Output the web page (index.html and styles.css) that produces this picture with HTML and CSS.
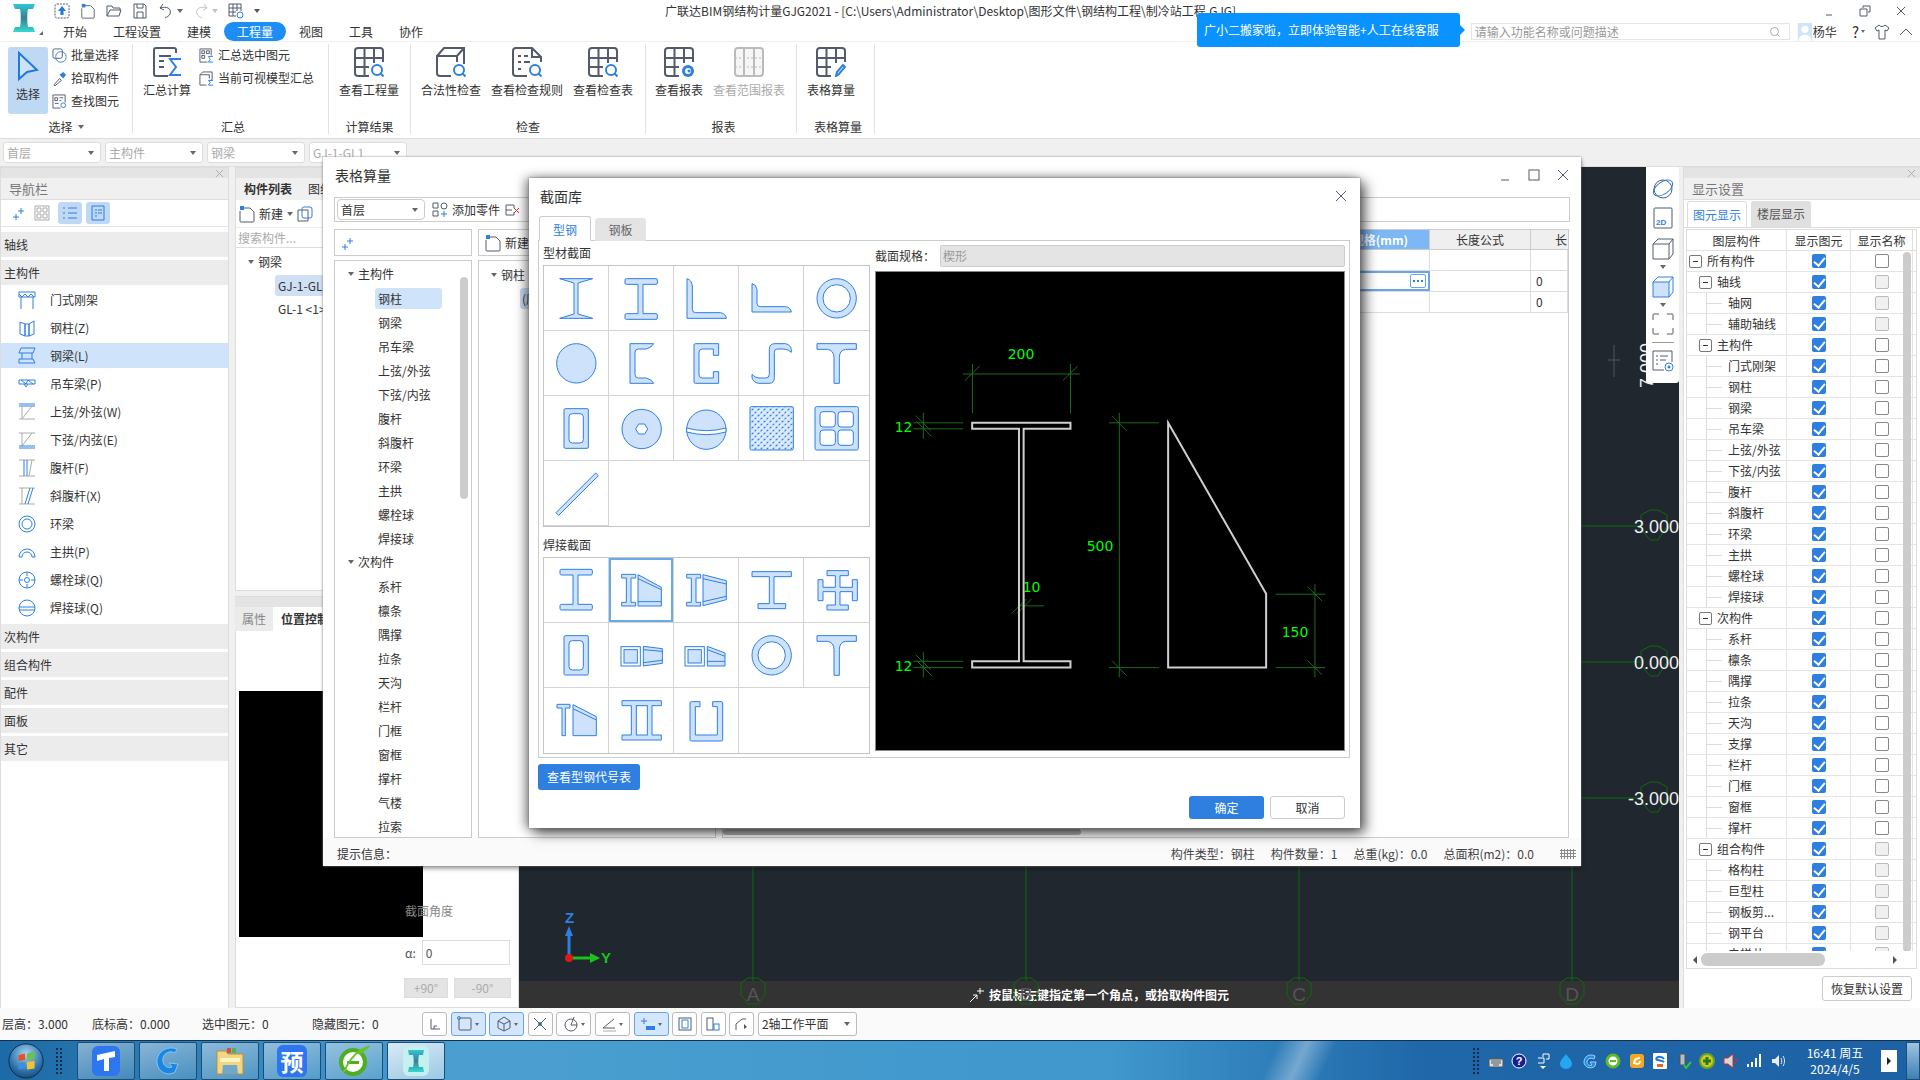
FILE: index.html
```html
<!DOCTYPE html>
<html lang="zh-CN">
<head>
<meta charset="utf-8">
<title>广联达BIM钢结构计量GJG2021</title>
<link rel="stylesheet" href="styles.css">
</head>
<body>
<svg class="sprite" xmlns="http://www.w3.org/2000/svg">
  <defs>
    <pattern id="hatch" width="18" height="18" patternUnits="userSpaceOnUse"><rect width="18" height="18" fill="#dceafc"/><path d="M2 2h8l-8 7zM11 11h7l-7 7z" fill="#2d7fe6"/></pattern>
    <linearGradient id="teal" x1="0" y1="0" x2="0" y2="1"><stop offset="0" stop-color="#2fc7d6"/><stop offset=".5" stop-color="#3a7f96"/><stop offset="1" stop-color="#33d9cf"/></linearGradient>
    <radialGradient id="orb" cx=".5" cy=".3" r=".8"><stop offset="0" stop-color="#a8d4f0"/><stop offset=".6" stop-color="#2f76b0"/><stop offset="1" stop-color="#12395f"/></radialGradient>
  </defs>
  <symbol id="g-grid" viewBox="0 0 30 30"><path class="dk" d="M15 29H4a3 3 0 0 1-3-3V4a3 3 0 0 1 3-3h22a3 3 0 0 1 3 3v11M1 11h28M1 20h14M10.500 1v28M20 1v15"/></symbol>
  <symbol id="g-mag" viewBox="0 0 30 30"><circle class="bl" cx="23" cy="23" r="5"/><path class="bl" d="M26.500 26.500l3 3"/></symbol>
  <symbol id="g-plus" viewBox="0 0 16 16"><path class="bl1" d="M9 3v6M6 6h6M4 9v6M1 12h6"/></symbol>
  <symbol id="g-new" viewBox="0 0 16 18"><path class="dk1" d="M4 3h7l4 4v9a1 1 0 0 1-1 1H2a1 1 0 0 1-1-1V6"/><path d="M1 1h4v4H1z" fill="#2f7fe0"/></symbol>
</svg>

<div class="app">
  <header class="titlebar">
    <div class="logo-col">
      <svg class="logo" viewBox="0 0 24 30"><path d="M1 1h22l-2 5h-5c-1 5-1 13 0 18h5l2 5H1l2-5h5c1-5 1-13 0-18H3z" fill="url(#teal)"/></svg>
      <i class="logo-tri"></i>
    </div>
    <div class="title-col">
      <div class="title-row">
        <div class="qat">
          <svg class="qi" viewBox="0 0 16 16"><rect class="dk1 dash" x="1" y="1" width="14" height="14" rx="2"/><path d="M8 3l4 5H9.500v4h-3V8H4z" fill="#1f78e0"/></svg>
          <svg class="qi" viewBox="0 0 16 18"><use href="#g-new"/></svg>
          <svg class="qi" viewBox="0 0 16 16"><path class="dk1" d="M1 13V3h5l1 2h7v2M1 13h12l2-6H4z"/></svg>
          <svg class="qi" viewBox="0 0 16 16"><path class="dk1" d="M2 1h10l2 2v12H2zM5 1v4h6V1M5 15V9h6v6"/></svg>
          <span class="qa-g"><svg class="qi" viewBox="0 0 16 16"><path class="dk1" d="M5 1L2 5l4 2M2 5c6-2 12 0 10 6-1 2-3 3-5 4"/></svg><i class="car"></i></span>
          <span class="qa-g"><svg class="qi dim" viewBox="0 0 16 16"><path class="dk1" d="M11 1l3 4-4 2M14 5C8 3 2 5 4 11c1 2 3 3 5 4"/></svg><i class="car dimc"></i></span>
          <svg class="qi" viewBox="0 0 16 16"><path class="dk1" d="M1 1h12v7M1 1v12h7M1 5h12M1 9h7M5 1v12M9 1v7"/><circle class="bl1" cx="12" cy="12" r="3"/></svg>
          <i class="car more"></i>
        </div>
        <div class="apptitle">广联达BIM钢结构计量GJG2021 - [C:\Users\Administrator\Desktop\图形文件\钢结构工程\制冷站工程.GJG]</div>
        <div class="winctl">
          <svg class="wc" viewBox="0 0 12 12"><path class="dk1" d="M3 10h6"/></svg>
          <svg class="wc" viewBox="0 0 12 12"><path class="dk1" d="M4 3V1h7v6H9M1 4h7v7H1z"/></svg>
          <svg class="wc" viewBox="0 0 12 12"><path class="dk1" d="M2 2l8 8M10 2l-8 8"/></svg>
        </div>
      </div>
      <div class="tab-row">
        <nav class="tabs">
          <span class="tab">开始</span><span class="tab">工程设置</span><span class="tab">建模</span><span class="tab on">工程量</span><span class="tab">视图</span><span class="tab">工具</span><span class="tab">协作</span>
        </nav>
        <div class="rtools">
          <div class="search"><span>请输入功能名称或问题描述</span><svg class="sic" viewBox="0 0 12 12"><circle cx="5.500" cy="5.500" r="4" class="gy"/><path class="gy" d="M8.500 8.500l2 2"/></svg></div>
          <svg class="avatar" viewBox="0 0 16 20"><rect width="16" height="20" fill="#cfe3fa"/><circle cx="8" cy="7" r="4" fill="#fff"/><path d="M1 20c0-5 3-7 7-7s7 2 7 7z" fill="#fff"/></svg>
          <span class="uname">杨华</span>
          <span class="help">?<i class="car"></i></span>
          <svg class="shirt" viewBox="0 0 16 16"><path class="dk1" d="M5 1L1 4l2 3 2-1v9h6V6l2 1 2-3-4-3c-1 2-5 2-6 0z"/></svg>
          <svg class="up" viewBox="0 0 14 10"><path class="dk1" d="M1 8l6-6 6 6"/></svg>
        </div>
      </div>
    </div>
  </header>

  <section class="ribbon">
    <div class="grp g-sel">
      <div class="grp-body">
        <div class="sel-btn"><svg class="sel-ic" viewBox="0 0 22 32"><path d="M2 2v26l8-7 10-2z" fill="#cfe2fb" stroke="#1f78e0" stroke-width="2"/></svg><span>选择</span></div>
        <div class="smalls">
          <div class="sm"><svg class="smi" viewBox="0 0 16 16"><rect class="dk1" x="1" y="1" width="10" height="10" rx="2"/><rect class="bl1" x="4" y="4" width="11" height="11" rx="5"/></svg>批量选择</div>
          <div class="sm"><svg class="smi" viewBox="0 0 16 16"><path class="dk1" d="M2 15l6-7 2 2-7 6z"/><path d="M8 4l4-3 3 3-3 4z" fill="#2f7fe0"/></svg>拾取构件</div>
          <div class="sm"><svg class="smi" viewBox="0 0 16 16"><path class="dk1" d="M9 15H1V1h13v8M3 4h3v3H3zM8 4h4M8 7h2M3 10h4"/><circle class="bl1" cx="12" cy="12" r="2.500"/></svg>查找图元</div>
        </div>
      </div>
      <div class="grp-lab">选择<i class="car"></i></div>
    </div>
    <div class="grp g-sum">
      <div class="grp-body">
        <div class="big"><svg class="bi" viewBox="0 0 30 30"><path class="dk" d="M24 6V3a2 2 0 0 0-2-2H4a2 2 0 0 0-2 2v24a2 2 0 0 0 2 2h12M7 9h12M7 14h5M7 20h5"/><path class="bl" d="M29 12H18l6 8-6 8h11"/></svg><span>汇总计算</span></div>
        <div class="smalls sm2">
          <div class="sm"><svg class="smi" viewBox="0 0 16 16"><path class="dk1" d="M9 15H1V1h12v7M3 3h3v3H3zM8 3h3v3H8zM3 8h3v3H3z"/><path class="bl1" d="M15 9h-5l2 3-2 3h5"/></svg>汇总选中图元</div>
          <div class="sm"><svg class="smi" viewBox="0 0 16 16"><path class="dk1" d="M8 15H1V4h10v4M1 4l3-3h10v8l-3 2"/><path class="bl1" d="M15 10h-5l2 2-2 3h5"/></svg>当前可视模型汇总</div>
        </div>
      </div>
      <div class="grp-lab">汇总</div>
    </div>
    <div class="grp g-res">
      <div class="grp-body pad">
        <div class="big"><svg class="bi" viewBox="0 0 30 30"><use href="#g-grid"/><use href="#g-mag"/></svg><span>查看工程量</span></div>
      </div>
      <div class="grp-lab">计算结果</div>
    </div>
    <div class="grp g-chk">
      <div class="grp-body pad">
        <div class="big"><svg class="bi" viewBox="0 0 30 30"><path class="dk" d="M15 29H4a3 3 0 0 1-3-3V9h20v6M1 9l7-8h20v16M21 9l7-8"/><use href="#g-mag"/></svg><span>合法性检查</span></div>
        <div class="big"><svg class="bi" viewBox="0 0 30 30"><path class="dk" d="M15 29H4a3 3 0 0 1-3-3V4a3 3 0 0 1 3-3h16l9 9v5M20 1v9h9M6 9h3M12 9h4M6 15h3M12 15h6M6 22h3"/><use href="#g-mag"/></svg><span>查看检查规则</span></div>
        <div class="big"><svg class="bi" viewBox="0 0 30 30"><use href="#g-grid"/><use href="#g-mag"/></svg><span>查看检查表</span></div>
      </div>
      <div class="grp-lab">检查</div>
    </div>
    <div class="grp g-rep">
      <div class="grp-body pad2">
        <div class="big"><svg class="bi" viewBox="0 0 30 30"><use href="#g-grid"/><circle cx="24" cy="24" r="6" fill="#2f7fe0"/><circle cx="24" cy="24" r="3" fill="#fff"/><circle cx="25" cy="24" r="1.500" fill="#2f7fe0"/></svg><span>查看报表</span></div>
        <div class="big off"><svg class="bi" viewBox="0 0 30 30"><rect x="1" y="1" width="28" height="28" rx="3" fill="#f6f6f6" stroke="#bbb" stroke-width="2"/><path d="M10 1v28M20 1v28" stroke="#bbb" stroke-width="2"/><path d="M1 11h28M1 20h28" stroke="#bbb" stroke-dasharray="2 2"/></svg><span>查看范围报表</span></div>
      </div>
      <div class="grp-lab">报表</div>
    </div>
    <div class="grp g-tab">
      <div class="grp-body pad">
        <div class="big"><svg class="bi" viewBox="0 0 30 30"><use href="#g-grid"/><path class="bl" d="M20 29l1-4 6-7 2 2-6 7z"/></svg><span>表格算量</span></div>
      </div>
      <div class="grp-lab">表格算量</div>
    </div>
  </section>

  <section class="combos">
    <div class="combo">首层<i class="car"></i></div>
    <div class="combo">主构件<i class="car"></i></div>
    <div class="combo">钢梁<i class="car"></i></div>
    <div class="combo">GJ-1-GL1<i class="car"></i></div>
  </section>

  <main class="workarea">
    <aside class="nav">
      <div class="strip"><svg class="x" viewBox="0 0 10 10"><path class="gy" d="M1 1l8 8M9 1l-8 8"/></svg></div>
      <div class="panel-title">导航栏</div>
      <div class="nav-tools">
        <svg class="nt" viewBox="0 0 16 16"><use href="#g-plus"/></svg>
        <svg class="nt" viewBox="0 0 16 16"><path class="gy" d="M1 1h14v14H1zM3 3h4v4H3zM9 3h4v4H9zM3 9h4v4H3zM9 9h4v4H9z"/></svg>
        <span class="nt-on"><svg class="nt" viewBox="0 0 16 16"><path class="bl1" d="M1 3h2M6 3h9M1 8h2M6 8h9M1 13h2M6 13h9"/></svg></span>
        <span class="nt-on"><svg class="nt" viewBox="0 0 16 16"><path class="bl1" d="M2 1h12v14H2zM5 5h2M8 5h4M5 8h2M8 8h4M5 11h2"/></svg></span>
      </div>
      <div class="sec-h">轴线</div>
      <div class="sec-h">主构件</div>
      <ul class="nav-list">
        <li><svg class="ni" viewBox="0 0 18 18"><path class="bl1" d="M1 1h16v5H1zM1 3l3 3 3-3 3 3 3-3 3 3M3 6v12M15 6v12"/></svg>门式刚架</li>
        <li><svg class="ni" viewBox="0 0 18 18"><path class="bl1" d="M2 3l5 2v12l-5-2zM7 5h4v12H7zM11 5l5-3v13l-5 2z"/></svg>钢柱(Z)</li>
        <li class="on"><svg class="ni" viewBox="0 0 18 18"><path class="bl1" d="M3 1h14l-2 5H1zM4 6v6M14 6v6M1 12h14l2 4H1z"/></svg>钢梁(L)</li>
        <li><svg class="ni" viewBox="0 0 18 18"><path class="bl1" d="M1 5h16v4H1zM3 5l5 4 2-4 5 4M6 9l2 3 2-3"/></svg>吊车梁(P)</li>
        <li><svg class="ni" viewBox="0 0 18 18"><path class="bl1" d="M1 1h16M1 3h16"/><path class="gy" d="M4 3v13M14 3L4 16M1 16h16"/></svg>上弦/外弦(W)</li>
        <li><svg class="ni" viewBox="0 0 18 18"><path class="gy" d="M1 2h16M4 2v13M14 2L4 15"/><path class="bl1" d="M1 15h16M1 17h16"/></svg>下弦/内弦(E)</li>
        <li><svg class="ni" viewBox="0 0 18 18"><path class="gy" d="M1 1h16M1 17h16M14 1L11 17"/><path class="bl1" d="M6 1v16M9 1v16"/></svg>腹杆(F)</li>
        <li><svg class="ni" viewBox="0 0 18 18"><path class="gy" d="M1 1h16M1 17h16M4 1v16"/><path class="bl1" d="M10 17l5-16M7 17l5-16"/></svg>斜腹杆(X)</li>
        <li><svg class="ni" viewBox="0 0 18 18"><circle class="bl1" cx="9" cy="9" r="8"/><circle class="bl1" cx="9" cy="9" r="5"/></svg>环梁</li>
        <li><svg class="ni" viewBox="0 0 18 18"><path class="bl1" d="M1 14a8 8 0 0 1 16 0h-3a5 5 0 0 0-10 0z"/></svg>主拱(P)</li>
        <li><svg class="ni" viewBox="0 0 18 18"><circle class="bl1" cx="9" cy="9" r="8"/><circle class="bl1" cx="9" cy="9" r="2.500"/><path class="bl1" d="M9 1v4M9 13v4M1 9h4M13 9h4"/></svg>螺栓球(Q)</li>
        <li><svg class="ni" viewBox="0 0 18 18"><circle class="bl1" cx="9" cy="9" r="8"/><path class="bl1" d="M1 8h16M1 11h16"/></svg>焊接球(Q)</li>
      </ul>
      <div class="sec-h">次构件</div>
      <div class="sec-h">组合构件</div>
      <div class="sec-h">配件</div>
      <div class="sec-h">面板</div>
      <div class="sec-h">其它</div>
    </aside>

    <section class="mid">
      <div class="mid-top">
        <div class="strip"></div>
        <div class="mid-tabs"><span class="mt on">构件列表</span><span class="mt">图纸管理</span></div>
        <div class="mid-bar"><svg class="new" viewBox="0 0 16 18"><use href="#g-new"/></svg><span>新建</span><i class="car"></i><svg class="nt" viewBox="0 0 16 16"><path class="dk1" d="M1 4h10v11H1z"/><rect class="bl1" x="5" y="1" width="10" height="11" rx="2"/></svg></div>
        <div class="mid-search">搜索构件...</div>
        <div class="mid-tree">
          <div class="mt-root"><i class="car"></i>钢梁</div>
          <div class="mt-sel">GJ-1-GL1</div>
          <div class="mt-item">GL-1 &lt;1&gt;</div>
        </div>
      </div>
      <div class="strip gap"></div>
      <div class="prop-tabs"><span class="pt">属性</span><span class="pt on">位置控制</span></div>
      <div class="prop-body">
        <div class="black"></div>
        <div class="prop-side">
          <div class="angle">截面角度</div>
          <div class="alpha"><span>α:</span><span class="ainput">0</span></div>
          <div class="rots"><span class="rot">+90°</span><span class="rot">-90°</span></div>
        </div>
      </div>
    </section>

    <section class="canvas">
      <div class="prompt"><svg class="pic" viewBox="0 0 16 16"><path d="M1 15L8 8M8 8H4M8 8v4M11 1v6M8 4h7" stroke="#fff" fill="none"/></svg>按鼠标左键指定第一个角点，或拾取构件图元</div>
      <svg class="grid-lines" viewBox="519 167 1160 841">
        <g class="gl">
          <path d="M753 167V981M1026 167V981M1299 167V981M1572 167V981M519 526H1640M519 662H1640M519 798H1640"/>
          <path d="M1641 515l9-5h8l9 5v11l-9 14h-8l-9-11z" class="oct"/>
          <path d="M1641 651l9-5h8l9 5v11l-9 14h-8l-9-11z" class="oct"/>
          <path d="M1641 787l9-5h8l9 5v11l-9 14h-8l-9-11z" class="oct"/>
          <path d="M741 983l7-5h10l7 5v12l-7 9h-10l-7-9zM1014 983l7-5h10l7 5v12l-7 9h-10l-7-9zM1287 983l7-5h10l7 5v12l-7 9h-10l-7-9zM1560 983l7-5h10l7 5v12l-7 9h-10l-7-9z" class="oct"/>
        </g>
        <text class="lv" x="1679" y="533">3.000</text>
        <text class="lv" x="1679" y="669">0.000</text>
        <text class="lv" x="1679" y="805">-3.000</text>
        <text class="lv" transform="translate(1653 363) rotate(-90)" x="20" y="0">7.000</text>
        <path class="dimline" d="M1614 345v32M1608 360h12"/>
        <g class="axl"><text x="753" y="1001">A</text><text x="1026" y="1001">B</text><text x="1299" y="1001">C</text><text x="1572" y="1001">D</text></g>
        <path d="M569 958V932" stroke="#2f7fe0" stroke-width="3"/><path d="M565 936l4-10 4 10z" fill="#2f7fe0"/>
        <path d="M569 958H592" stroke="#1cc21c" stroke-width="3"/><path d="M590 953l10 5-10 5z" fill="#1cc21c"/>
        <circle cx="569" cy="958" r="4" fill="#e01818"/>
        <text class="axn zb" x="565" y="923">Z</text>
        <text class="axn zg" x="601" y="963">Y</text>
      </svg>
      <div class="vtool">
        <svg class="vt" viewBox="0 0 24 24"><circle class="dk1" cx="12" cy="13" r="9"/><ellipse class="bl1" cx="12" cy="12" rx="11" ry="6" transform="rotate(-35 12 12)"/></svg>
        <svg class="vt tall" viewBox="0 0 24 24"><rect class="dk1" x="3" y="2" width="18" height="20" rx="1"/><text class="t2d" x="5" y="19">2D</text></svg>
        <svg class="vt" viewBox="0 0 24 24"><path class="dk1" d="M2 8l5-5h15v15l-4 5H2zM2 8h16v15M18 8l4-5"/></svg>
        <i class="car vc"></i>
        <svg class="vt" viewBox="0 0 24 24"><path d="M2 8h16v15H2z" fill="#cfe2fb"/><path class="bl1" d="M2 8l5-5h15v15l-4 5H2zM2 8h16v15M18 8l4-5"/></svg>
        <i class="car vc"></i>
        <svg class="vt" viewBox="0 0 24 24"><path class="dk1" d="M2 8V3a1 1 0 0 1 1-1h5M16 2h5a1 1 0 0 1 1 1v5M22 16v5a1 1 0 0 1-1 1h-5M8 22H3a1 1 0 0 1-1-1v-5"/></svg>
        <hr class="vsep">
        <svg class="vt" viewBox="0 0 24 24"><path class="dk1" d="M13 21H2V2h19v11M5 7h2M9 7h8M5 11h2M9 11h6M5 15h2"/><circle class="bl1" cx="18" cy="18" r="4"/><circle cx="18" cy="18" r="1.500" fill="#2f7fe0"/></svg>
      </div>
    </section>

    <aside class="display">
      <div class="strip"><svg class="x" viewBox="0 0 10 10"><path class="gy" d="M1 1l8 8M9 1l-8 8"/></svg></div>
      <div class="panel-title">显示设置</div>
      <div class="disp-tabs"><span class="dt on">图元显示</span><span class="dt">楼层显示</span></div>
      <div class="dtable">
        <div class="dhead"><span>图层构件</span><span>显示图元</span><span class="clip">显示名称</span></div>
        <div class="drows">
          <div class="row"><div class="nm l0"><b class="exp"></b>所有构件</div><div class="c"><i class="ck"></i></div><div class="c"><i class="un"></i></div></div>
          <div class="row"><div class="nm l1"><b class="exp"></b>轴线</div><div class="c"><i class="ck"></i></div><div class="c"><i class="dis"></i></div></div>
          <div class="row"><div class="nm l2">轴网</div><div class="c"><i class="ck"></i></div><div class="c"><i class="dis"></i></div></div>
          <div class="row"><div class="nm l2">辅助轴线</div><div class="c"><i class="ck"></i></div><div class="c"><i class="dis"></i></div></div>
          <div class="row"><div class="nm l1"><b class="exp"></b>主构件</div><div class="c"><i class="ck"></i></div><div class="c"><i class="un"></i></div></div>
          <div class="row"><div class="nm l2">门式刚架</div><div class="c"><i class="ck"></i></div><div class="c"><i class="un"></i></div></div>
          <div class="row"><div class="nm l2">钢柱</div><div class="c"><i class="ck"></i></div><div class="c"><i class="un"></i></div></div>
          <div class="row"><div class="nm l2">钢梁</div><div class="c"><i class="ck"></i></div><div class="c"><i class="un"></i></div></div>
          <div class="row"><div class="nm l2">吊车梁</div><div class="c"><i class="ck"></i></div><div class="c"><i class="un"></i></div></div>
          <div class="row"><div class="nm l2">上弦/外弦</div><div class="c"><i class="ck"></i></div><div class="c"><i class="un"></i></div></div>
          <div class="row"><div class="nm l2">下弦/内弦</div><div class="c"><i class="ck"></i></div><div class="c"><i class="un"></i></div></div>
          <div class="row"><div class="nm l2">腹杆</div><div class="c"><i class="ck"></i></div><div class="c"><i class="un"></i></div></div>
          <div class="row"><div class="nm l2">斜腹杆</div><div class="c"><i class="ck"></i></div><div class="c"><i class="un"></i></div></div>
          <div class="row"><div class="nm l2">环梁</div><div class="c"><i class="ck"></i></div><div class="c"><i class="un"></i></div></div>
          <div class="row"><div class="nm l2">主拱</div><div class="c"><i class="ck"></i></div><div class="c"><i class="un"></i></div></div>
          <div class="row"><div class="nm l2">螺栓球</div><div class="c"><i class="ck"></i></div><div class="c"><i class="un"></i></div></div>
          <div class="row"><div class="nm l2">焊接球</div><div class="c"><i class="ck"></i></div><div class="c"><i class="un"></i></div></div>
          <div class="row"><div class="nm l1"><b class="exp"></b>次构件</div><div class="c"><i class="ck"></i></div><div class="c"><i class="un"></i></div></div>
          <div class="row"><div class="nm l2">系杆</div><div class="c"><i class="ck"></i></div><div class="c"><i class="un"></i></div></div>
          <div class="row"><div class="nm l2">檩条</div><div class="c"><i class="ck"></i></div><div class="c"><i class="un"></i></div></div>
          <div class="row"><div class="nm l2">隅撑</div><div class="c"><i class="ck"></i></div><div class="c"><i class="un"></i></div></div>
          <div class="row"><div class="nm l2">拉条</div><div class="c"><i class="ck"></i></div><div class="c"><i class="un"></i></div></div>
          <div class="row"><div class="nm l2">天沟</div><div class="c"><i class="ck"></i></div><div class="c"><i class="un"></i></div></div>
          <div class="row"><div class="nm l2">支撑</div><div class="c"><i class="ck"></i></div><div class="c"><i class="un"></i></div></div>
          <div class="row"><div class="nm l2">栏杆</div><div class="c"><i class="ck"></i></div><div class="c"><i class="un"></i></div></div>
          <div class="row"><div class="nm l2">门框</div><div class="c"><i class="ck"></i></div><div class="c"><i class="un"></i></div></div>
          <div class="row"><div class="nm l2">窗框</div><div class="c"><i class="ck"></i></div><div class="c"><i class="un"></i></div></div>
          <div class="row"><div class="nm l2">撑杆</div><div class="c"><i class="ck"></i></div><div class="c"><i class="un"></i></div></div>
          <div class="row"><div class="nm l1"><b class="exp"></b>组合构件</div><div class="c"><i class="ck"></i></div><div class="c"><i class="dis"></i></div></div>
          <div class="row"><div class="nm l2">格构柱</div><div class="c"><i class="ck"></i></div><div class="c"><i class="dis"></i></div></div>
          <div class="row"><div class="nm l2">巨型柱</div><div class="c"><i class="ck"></i></div><div class="c"><i class="dis"></i></div></div>
          <div class="row"><div class="nm l2">钢板剪...</div><div class="c"><i class="ck"></i></div><div class="c"><i class="dis"></i></div></div>
          <div class="row"><div class="nm l2">钢平台</div><div class="c"><i class="ck"></i></div><div class="c"><i class="dis"></i></div></div>
          <div class="row"><div class="nm l2">电梯井</div><div class="c"><i class="ck"></i></div><div class="c"><i class="dis"></i></div></div>
        </div>
        <div class="vscroll"></div>
        <div class="hscroll"><i class="hl"></i><b class="hthumb"></b><i class="hr"></i></div>
      </div>
      <div class="disp-foot"><span class="btn">恢复默认设置</span></div>
    </aside>
  </main>

  <footer class="status">
    <span class="st st1">层高：3.000</span><span class="st st2">底标高：0.000</span><span class="st st3">选中图元：0</span><span class="st st4">隐藏图元：0</span>
    <div class="stools">
      <span class="sb"><svg viewBox="0 0 16 16"><path class="dk1" d="M4 3v10h9M7 13v-3h3"/></svg></span>
      <span class="sb wd on"><svg viewBox="0 0 16 16"><rect class="dk1" x="2" y="2" width="12" height="12" rx="1"/><circle class="bl1" cx="2" cy="2" r="1.500"/></svg><i class="car"></i></span>
      <span class="sb wd on"><svg viewBox="0 0 16 16"><path class="dk1" d="M8 1l6 4v7l-6 3-6-3V5zM2 5l6 3 6-3M8 8v7"/></svg><i class="car"></i></span>
      <span class="sb"><svg viewBox="0 0 16 16"><path class="dk1" d="M2 2l12 12M14 2L2 14"/><circle class="bl1" cx="8" cy="8" r="1.500"/></svg></span>
      <span class="sb wd"><svg viewBox="0 0 16 16"><circle class="dk1" cx="8" cy="9" r="6"/><path class="dk1" d="M8 9h6M8 9l3-8"/></svg><i class="car"></i></span>
      <span class="sb wd"><svg viewBox="0 0 16 16"><path class="dk1" d="M2 12L13 3M2 12h12"/><path class="gy" d="M2 15h13"/></svg><i class="car"></i></span>
      <span class="sb wd on"><svg viewBox="0 0 16 16"><path class="bl1" d="M4 2v6M1 5h6"/><rect x="6" y="10" width="9" height="4" fill="#2f7fe0"/></svg><i class="car"></i></span>
      <span class="sb"><svg viewBox="0 0 16 16"><rect class="dk1" x="2" y="2" width="12" height="12"/><rect class="bl1" x="5" y="4" width="6" height="8"/></svg></span>
      <span class="sb"><svg viewBox="0 0 16 16"><rect class="dk1" x="2" y="2" width="6" height="12"/><rect class="bl1" x="9" y="8" width="5" height="6"/></svg></span>
      <span class="sb"><svg viewBox="0 0 16 16"><path class="dk1" d="M2 14V8l6-5h4"/><path d="M10 8l3 3-3 2z" fill="#555"/></svg></span>
      <span class="wp">2轴工作平面<i class="car"></i></span>
    </div>
  </footer>

  <footer class="taskbar">
    <svg class="orb" viewBox="0 0 40 40"><circle cx="20" cy="20" r="18" fill="url(#orb)" stroke="#0d2c48"/><path d="M12 14l7-2v7l-7 1z" fill="#e8502a"/><path d="M21 12l8-2v8l-8 1z" fill="#6cc24a"/><path d="M12 22l7-1v7l-7 1z" fill="#3a8fe0"/><path d="M21 21l8-1v8l-8 1z" fill="#f2c230"/></svg>
    <i class="tgrip"></i>
    <div class="tbtns">
      <span class="tb"><svg viewBox="0 0 32 32"><rect x="2" y="1" width="28" height="30" rx="6" fill="#2e76f0"/><path d="M7 10l18-4v6l-6 1v13h-5V14l-7 2z" fill="#fff"/></svg></span>
      <span class="tb"><svg viewBox="0 0 32 32"><path d="M25 4C14 0 4 8 5 18c1 9 11 14 18 9l3-8-9-1 3 4c-6 2-10-3-9-9 1-5 7-8 12-5z" fill="#1b86e0" stroke="#7fc6f5"/></svg></span>
      <span class="tb"><svg viewBox="0 0 32 32"><path d="M3 6h9l2 3h15v20H3z" fill="#f2d683" stroke="#b5913c"/><path d="M6 13h20v4H6z" fill="#fff3c4"/><path d="M9 20h14l1 9H8z" fill="#6fa8c8"/><path d="M13 3h4v5h-4z" fill="#d8503a"/><path d="M18 3h4v5h-4z" fill="#5ab050"/></svg></span>
      <span class="tb"><span class="yu">预</span></span>
      <span class="tb"><svg viewBox="0 0 32 32"><circle cx="15" cy="17" r="12" fill="#fff" stroke="#4fae1e" stroke-width="4"/><path d="M9 16h12v3H9z" fill="#4fae1e"/><path d="M6 27C12 12 22 4 30 2c-3 3-6 4-8 7" fill="none" stroke="#6ac22a" stroke-width="2"/></svg></span>
      <span class="tb act"><svg viewBox="0 0 32 32"><rect x="3" y="1" width="26" height="30" rx="6" fill="#c5f0f0"/><path d="M8 5h16l-1 5h-4c-1 4-1 8 0 12h4l1 5H8l1-5h4c1-4 1-8 0-12H9z" fill="url(#teal)"/></svg></span>
    </div>
    <div class="tray">
      <i class="tgrip"></i>
      <svg class="ti" viewBox="0 0 16 16"><rect x="1" y="6" width="14" height="8" rx="1" fill="#d5dde5" stroke="#555"/><path d="M3 8h10M3 10h10M5 12h6M8 6V2" stroke="#555"/></svg>
      <svg class="ti" viewBox="0 0 16 16"><circle cx="8" cy="8" r="7" fill="#16208f" stroke="#fff"/><text class="thelp" x="8" y="12">?</text></svg>
      <svg class="ti" viewBox="0 0 16 16"><path d="M8 4V1h6v5h-3M3 5h6v5H3" fill="none" stroke="#fff"/><path d="M5 13h6l-3 3z" fill="#fff"/></svg>
      <svg class="ti" viewBox="0 0 16 16"><path d="M8 1c2 3 6 6 6 10a6 5 0 0 1-12 0c0-4 4-7 6-10z" fill="#22a7f0"/></svg>
      <svg class="ti" viewBox="0 0 16 16"><path d="M13 3C7 0 2 4 2 9s7 8 11 4l1-4H8l2 3c-3 1-5 0-5-3 0-3 3-5 7-3z" fill="#1d8ae8" stroke="#9fd3f8"/></svg>
      <svg class="ti" viewBox="0 0 16 16"><circle cx="8" cy="8" r="6" fill="#fff" stroke="#5fba28" stroke-width="3"/><path d="M5 8h6" stroke="#5fba28" stroke-width="2"/></svg>
      <svg class="ti" viewBox="0 0 16 16"><rect x="1" y="1" width="14" height="14" rx="3" fill="#f6a81e"/><path d="M5 11c0-4 2-6 6-6M11 8c0 3-3 4-5 2" fill="none" stroke="#fff" stroke-width="2"/></svg>
      <svg class="ti" viewBox="0 0 16 16"><rect x="1" y="0" width="14" height="16" rx="1" fill="#fff"/><path d="M4 6c1-3 6-3 8 0M4 6c1 2 6 1 8 3" fill="none" stroke="#1b78d8" stroke-width="2"/><path d="M5 11h6v3H5z" fill="#e8602a"/></svg>
      <svg class="ti" viewBox="0 0 16 16"><rect x="4" y="1" width="5" height="11" fill="#b8bec4" stroke="#555"/><path d="M8 12l2 3 5-6" fill="none" stroke="#38c038" stroke-width="2"/></svg>
      <svg class="ti" viewBox="0 0 16 16"><circle cx="8" cy="8" r="7" fill="#d8c820" stroke="#6ca81c" stroke-width="2"/><path d="M8 4v8M4 8h8" stroke="#1f7d1f" stroke-width="3"/></svg>
      <svg class="ti" viewBox="0 0 16 16"><path d="M1 5h4l5-4v14l-5-4H1z" fill="#d8d8d8" stroke="#c8352a"/><path d="M12 5l2 3-2 3" fill="none" stroke="#e23"/></svg>
      <svg class="ti" viewBox="0 0 16 16"><path d="M1 14h2v-3H1zM5 14h2V9H5zM9 14h2V5H9zM13 14h2V1h-2z" fill="#fff"/></svg>
      <svg class="ti" viewBox="0 0 16 16"><path d="M2 6h3l4-4v12l-4-4H2z" fill="#e8eef4"/><path d="M11 5c1 2 1 4 0 6M13 3c2 3 2 7 0 10" fill="none" stroke="#e8eef4"/></svg>
      <div class="clock"><span>16:41 周五</span><span>2024/4/5</span></div>
      <span class="showd"><i></i></span>
      <span class="gloss"></span>
    </div>
  </footer>

  <div class="dlg big-dlg">
    <div class="dlg-head"><span class="dlg-title">表格算量</span>
      <div class="dlg-ctl">
        <svg class="wc" viewBox="0 0 12 12"><path class="dk1" d="M2 11h8"/></svg>
        <svg class="wc" viewBox="0 0 12 12"><rect class="dk1" x="1" y="1" width="10" height="10"/></svg>
        <svg class="wc" viewBox="0 0 12 12"><path class="dk1" d="M1 1l10 10M11 1L1 11"/></svg>
      </div>
    </div>
    <div class="dlg-bar">
      <div class="dcombo">首层<i class="car"></i></div>
      <svg class="nt big16" viewBox="0 0 16 16"><path class="dk1" d="M1 1h5v5H1zM1 9h5v5H1z"/><circle class="dk1" cx="12" cy="4" r="3"/><path class="bl1" d="M12 9v6M9 12h6"/></svg>
      <span>添加零件</span>
      <svg class="nt" viewBox="0 0 16 16"><path class="dk1" d="M2 3h8M2 13h8M2 3v10M10 3v3M10 10v3M2 8h6"/><path d="M10 6l5 5M15 6l-5 5" stroke="#e03030" fill="none"/></svg>
    </div>
    <div class="dlg-body">
      <div class="col1">
        <div class="fr frbar"><svg class="nt" viewBox="0 0 16 16"><use href="#g-plus"/></svg></div>
        <div class="fr tree">
          <div class="tp"><i class="car"></i>主构件</div>
          <div class="ti2 on"><span>钢柱</span></div>
          <div class="ti2"><span>钢梁</span></div>
          <div class="ti2"><span>吊车梁</span></div>
          <div class="ti2"><span>上弦/外弦</span></div>
          <div class="ti2"><span>下弦/内弦</span></div>
          <div class="ti2"><span>腹杆</span></div>
          <div class="ti2"><span>斜腹杆</span></div>
          <div class="ti2"><span>环梁</span></div>
          <div class="ti2"><span>主拱</span></div>
          <div class="ti2"><span>螺栓球</span></div>
          <div class="ti2"><span>焊接球</span></div>
          <div class="tp"><i class="car"></i>次构件</div>
          <div class="ti2"><span>系杆</span></div>
          <div class="ti2"><span>檩条</span></div>
          <div class="ti2"><span>隅撑</span></div>
          <div class="ti2"><span>拉条</span></div>
          <div class="ti2"><span>天沟</span></div>
          <div class="ti2"><span>栏杆</span></div>
          <div class="ti2"><span>门框</span></div>
          <div class="ti2"><span>窗框</span></div>
          <div class="ti2"><span>撑杆</span></div>
          <div class="ti2"><span>气楼</span></div>
          <div class="ti2"><span>拉索</span></div>
          <i class="tscroll"></i>
        </div>
      </div>
      <div class="col2">
        <div class="fr frbar"><svg class="new" viewBox="0 0 16 18"><use href="#g-new"/></svg><span>新建</span></div>
        <div class="fr tree2">
          <div class="tp2"><i class="car"></i>钢柱</div>
          <div class="t2sel">(底)</div>
        </div>
      </div>
      <div class="col3">
        <div class="thead"><span class="th blue">规格(mm)</span><span class="th">长度公式</span><span class="th thl">长</span></div>
        <div class="trow"><span></span><span></span><span></span></div>
        <div class="trow sel"><span class="ellip"><b></b></span><span></span><span>0</span></div>
        <div class="trow"><span></span><span></span><span>0</span></div>
        <div class="tspace"></div>
        <div class="tscrollh"></div>
      </div>
    </div>
    <div class="dlg-status"><span>提示信息：</span>
      <div class="stat-r"><span>构件类型：钢柱</span><span>构件数量：1</span><span>总重(kg)：0.0</span><span>总面积(m2)：0.0</span><i class="grip"></i></div>
    </div>
  </div>

  <div class="dlg small-dlg">
    <div class="dlg-head2"><span class="dlg-title2">截面库</span><svg class="wc2" viewBox="0 0 12 12"><path class="dk1" d="M1 1l10 10M11 1L1 11"/></svg></div>
    <div class="s-tabs"><span class="s-tab on">型钢</span><span class="s-tab">钢板</span></div>
    <div class="s-frame">
      <div class="s-left">
        <div class="s-lab">型材截面</div>
        <div class="secgrid">
          <div class="cell"><svg class="sec" viewBox="0 0 195 195"><path d="M47 38H146L102 51V144L146 157H47L90 144V51Z"/></svg></div>
          <div class="cell"><svg class="sec" viewBox="0 0 195 195"><path d="M52 38H141a4 4 0 0 1 4 4v9a4 4 0 0 1-4 4H102V143H141a4 4 0 0 1 4 4v9a4 4 0 0 1-4 4H52a4 4 0 0 1-4-4v-9a4 4 0 0 1 4-4H87V55H52a4 4 0 0 1-4-4v-9a4 4 0 0 1 4-4z"/></svg></div>
          <div class="cell"><svg class="sec" viewBox="0 0 195 195"><path d="M39 38Q53 42 55 60V130Q55 140 65 140H140Q155 143 157 157H39Z"/></svg></div>
          <div class="cell"><svg class="sec" viewBox="0 0 195 195"><path d="M39 53Q52 56 54 70V112Q54 122 64 122H140Q155 125 157 138H39Z"/></svg></div>
          <div class="cell"><svg class="sec" viewBox="0 0 195 195"><circle cx="98" cy="97" r="59"/><circle class="w" cx="98" cy="97" r="41"/></svg></div>

          <div class="cell"><svg class="sec" viewBox="0 0 195 195"><circle cx="97" cy="97" r="59"/></svg></div>
          <div class="cell"><svg class="sec" viewBox="0 0 195 195"><path d="M63 38H134Q128 50 112 54H88Q78 54 78 64V130Q78 141 88 141H112Q128 145 134 157H63Z"/></svg></div>
          <div class="cell"><svg class="sec" viewBox="0 0 195 195"><path d="M60 42a4 4 0 0 1 4-4H134V73H118V54H85a10 10 0 0 0-10 10V131a10 10 0 0 0 10 10H118V122H134V157H64a4 4 0 0 1-4-4Z"/></svg></div>
          <div class="cell"><svg class="sec" viewBox="0 0 195 195"><path d="M91 55Q91 38 108 38H140Q155 42 157 55V64Q150 56 135 54H115Q106 54 106 64V140Q106 157 90 157H58Q42 153 39 140V130Q46 140 60 141H80Q91 141 91 130Z"/></svg></div>
          <div class="cell"><svg class="sec" viewBox="0 0 195 195"><path d="M39 38H157V55H125Q106 58 106 80V157H90V80Q90 58 70 55H39Z"/></svg></div>

          <div class="cell"><svg class="sec" viewBox="0 0 195 195"><rect x="60" y="38" width="73" height="119" rx="4"/><rect class="w" x="75" y="53" width="43" height="88" rx="10"/></svg></div>
          <div class="cell"><svg class="sec" viewBox="0 0 195 195"><circle cx="98" cy="99" r="59"/><path class="w" d="M80 99l9-15h18l9 15-9 15H89z"/></svg></div>
          <div class="cell"><svg class="sec" viewBox="0 0 195 195"><circle cx="97" cy="101" r="59"/><path class="w" d="M38 96Q97 112 156 96V108Q97 124 38 108Z"/></svg></div>
          <div class="cell"><svg class="sec hatch" viewBox="0 0 195 195"><rect x="33" y="32" width="130" height="130" rx="4"/></svg></div>
          <div class="cell"><svg class="sec" viewBox="0 0 195 195"><rect x="33" y="32" width="130" height="130" rx="5"/><rect class="w" x="48" y="47" width="46" height="46" rx="9"/><rect class="w" x="102" y="47" width="46" height="46" rx="9"/><rect class="w" x="48" y="102" width="46" height="46" rx="9"/><rect class="w" x="102" y="102" width="46" height="46" rx="9"/></svg></div>

          <div class="cell"><svg class="sec" viewBox="0 0 195 195"><path d="M155 36L163 44L44 163L36 155Z"/></svg></div>
          <div class="cell span4"></div>
        </div>
        <div class="s-lab lab2">焊接截面</div>
        <div class="secgrid g2">
          <div class="cell"><svg class="sec" viewBox="0 0 195 195"><path d="M52 34H141a4 4 0 0 1 4 4v9a4 4 0 0 1-4 4H102V139H141a4 4 0 0 1 4 4v9a4 4 0 0 1-4 4H52a4 4 0 0 1-4-4v-9a4 4 0 0 1 4-4H87V51H52a4 4 0 0 1-4-4v-9a4 4 0 0 1 4-4z"/></svg></div>
          <div class="cell picked"><svg class="sec" viewBox="0 0 195 195"><path d="M38 49H80V60H66V133H80V144H38V133H52V60H38Z"/><path d="M87 50L157 88V144H87Z"/><path d="M87 62L157 95M87 131H157"/></svg></div>
          <div class="cell"><svg class="sec" viewBox="0 0 195 195"><path d="M38 49H80V60H66V133H80V144H38V133H52V60H38Z"/><path d="M87 50L157 68V125L87 143Z"/><path d="M87 62L157 78M87 131L157 115"/></svg></div>
          <div class="cell"><svg class="sec" viewBox="0 0 195 195"><path d="M39 41H157V56H105V137H140V152H57V137H91V56H39Z"/></svg></div>
          <div class="cell"><svg class="sec" viewBox="0 0 195 195"><path d="M69 38H133V53H108V88H145V65H160V128H145V101H108V141H133V156H69V141H94V101H57V128H42V65H57V88H94V53H69Z"/></svg></div>

          <div class="cell"><svg class="sec" viewBox="0 0 195 195"><rect x="60" y="38" width="73" height="118" rx="4"/><rect class="w" x="75" y="53" width="43" height="88" rx="10"/></svg></div>
          <div class="cell"><svg class="sec" viewBox="0 0 195 195"><rect class="w" x="36" y="71" width="58" height="58"/><rect x="45" y="80" width="40" height="40"/><path d="M103 70L160 77V121L103 129Z"/><path d="M103 80L160 85M103 119L160 112"/></svg></div>
          <div class="cell"><svg class="sec" viewBox="0 0 195 195"><rect class="w" x="33" y="71" width="58" height="58"/><rect x="42" y="80" width="40" height="40"/><path d="M100 70L153 90V129H100Z"/><path d="M100 80L153 100M100 115H153"/></svg></div>
          <div class="cell"><svg class="sec" viewBox="0 0 195 195"><circle cx="98" cy="97" r="59"/><circle class="w" cx="98" cy="97" r="41"/></svg></div>
          <div class="cell"><svg class="sec" viewBox="0 0 195 195"><path d="M39 38H157V55H125Q106 58 106 80V157H90V80Q90 58 70 55H39Z"/></svg></div>

          <div class="cell"><svg class="sec" viewBox="0 0 195 195"><path d="M39 49H78V60H64V143H54V60H39Z"/><path d="M87 50L157 86V143H87Z"/><path d="M87 62L157 96"/></svg></div>
          <div class="cell"><svg class="sec" viewBox="0 0 195 195"><path d="M39 38H157V53H129V141H157V156H39V141H67V53H39Z"/><rect class="w" x="82" y="53" width="33" height="88"/></svg></div>
          <div class="cell"><svg class="sec" viewBox="0 0 195 195"><path d="M52 41H78V56H64V141H130V56H116V41H142a4 4 0 0 1 4 4V155a4 4 0 0 1-4 4H52a4 4 0 0 1-4-4V45a4 4 0 0 1 4-4Z"/></svg></div>
          <div class="cell span2"></div>
        </div>
      </div>
      <div class="s-right">
        <div class="spec"><label>截面规格：</label><div class="spec-in">楔形</div></div>
        <svg class="drawing" viewBox="16 -177 1408 1439">
          <g class="dm">
            <path d="M277 130H630M306 100V248M601 100V248M283 150L328 106M578 150L623 106"/>
            <path d="M128 277H278M128 295H278M158 247V325M135 255L180 300M138 273L183 318"/>
            <path d="M128 995H278M128 1014H278M158 967V1043M135 975L180 1020M138 993L183 1038"/>
            <path d="M748 247V1043M717 277H867M717 1014H867M726 256L770 301M726 993L770 1038"/>
            <path d="M446 797V845M460 797V845M446 828H521M424 851L468 808M440 851L483 808"/>
            <path d="M1337 762V1043M1218 793H1368M1218 1014H1368M1315 771L1358 813M1315 993L1358 1035"/>
          </g>
          <g class="sh">
            <path d="M305 277H601V295H460V995H601V1014H305V995H446V295H305Z"/>
            <path d="M895 277L1190 792V1014H895Z"/>
          </g>
          <g class="dt-txt">
            <text x="412" y="86">200</text><text x="72" y="304">12</text><text x="72" y="1024">12</text>
            <text x="650" y="663">500</text><text x="457" y="786">10</text><text x="1237" y="921">150</text>
          </g>
        </svg>
      </div>
    </div>
    <div class="s-foot1"><span class="pbtn wide">查看型钢代号表</span></div>
    <div class="s-foot2"><span class="pbtn ok">确定</span><span class="btn cancel">取消</span></div>
  </div>

  <div class="promo">广小二搬家啦，立即体验智能+人工在线客服</div>
</div>
</body>
</html>
```
FILE: styles.css
```css
* { box-sizing: border-box; }
html, body { margin: 0; padding: 0; }
body { width: 1920px; height: 1080px; overflow: hidden; font: 12px/16px "Noto Sans CJK SC", "Liberation Sans", sans-serif; color: #333; background: #f0f0f0; }
ul { list-style: none; margin: 0; padding: 0; }
i, b { font-style: normal; }
svg { display: block; flex: none; }
.sprite { position: absolute; width: 0; height: 0; }
.dk, .dk1, .gy, .bl, .bl1 { fill: none; }
.dk { stroke: #525a6b; stroke-width: 2; }
.dk1 { stroke: #525a6b; stroke-width: 1; }
.gy { stroke: #aaa; stroke-width: 1; }
.bl { stroke: #2f7fe0; stroke-width: 2; }
.bl1 { stroke: #2f7fe0; stroke-width: 1; }
.dash { stroke-dasharray: 2 1; }
.car { display: inline-block; width: 0; height: 0; border: 3px solid transparent; border-top: 4px solid #666; border-bottom: 0; }

.app { position: relative; width: 1920px; height: 1080px; display: grid; grid-template-rows: 41px 98px 28px 841px 32px 40px; overflow: hidden; }

/* title bar */
.titlebar { display: flex; background: #fff; }
.logo-col { width: 50px; flex: none; position: relative; padding: 3px 0 0 12px; }
.logo { width: 24px; height: 30px; }
.logo-tri { position: absolute; left: 39px; top: 31px; border-right: 4px solid #666; border-top: 4px solid transparent; }
.title-col { flex: 1; display: flex; flex-direction: column; min-width: 0; }
.title-row { height: 22px; display: flex; align-items: center; }
.qat { width: 615px; flex: none; display: flex; align-items: center; gap: 10px; padding-left: 4px; }
.qi { width: 16px; height: 16px; }
.qa-g { display: flex; align-items: center; gap: 3px; }
.qi.dim { opacity: .35; }
.car.dimc { opacity: .4; }
.car.more { border-top-color: #555; }
.apptitle { white-space: nowrap; width: 1130px; flex: none; }
.winctl { margin-left: auto; display: flex; gap: 24px; padding-right: 13px; }
.wc { width: 12px; height: 12px; }
.tab-row { height: 19px; display: flex; align-items: center; }
.tabs { display: flex; }
.tab { padding: 0 13px; height: 19px; line-height: 19px; }
.tab.on { background: #1c8ef5; color: #fff; border-radius: 10px; }
.rtools { margin-left: auto; display: flex; align-items: center; height: 19px; padding-right: 7px; }
.search { width: 319px; height: 17px; border: 1px solid #e4e4e4; display: flex; align-items: center; justify-content: space-between; padding: 0 8px 0 3px; color: #999; }
.sic { width: 12px; height: 12px; }
.avatar { width: 16px; height: 18px; margin-left: 7px; }
.uname { margin-right: 15px; }
.help { display: flex; align-items: center; gap: 2px; font-size: 15px; margin-right: 9px; }
.help .car { border-width: 2px; border-top-width: 3px; }
.shirt { width: 16px; height: 16px; margin-right: 9px; }
.up { width: 14px; height: 10px; }

.promo { position: absolute; left: 1197px; top: 13px; width: 263px; height: 34px; background: #0a93ff; color: #fff; border-radius: 3px; line-height: 34px; padding-left: 7px; white-space: nowrap; }
.promo::after { content: ""; position: absolute; right: -5px; top: 12px; border-left: 5px solid #0a93ff; border-top: 5px solid transparent; border-bottom: 5px solid transparent; }

/* ribbon */
.ribbon { display: flex; background: #fff; border-top: 1px solid #eee; border-bottom: 1px solid #ddd; }
.grp { display: flex; flex-direction: column; border-right: 1px solid #e2e2e2; margin: 2px 0 4px; }
.g-sel { width: 133px; } .g-sum { width: 196px; } .g-res { width: 82px; } .g-chk { width: 235px; } .g-rep { width: 151px; } .g-tab { width: 78px; }
.grp-body { flex: 1; display: flex; padding-top: 3px; }
.grp-body.pad { padding-left: 10px; gap: 10px; }
.grp-body.pad2 { padding-left: 9px; gap: 10px; }
.grp-lab { height: 20px; line-height: 20px; text-align: center; display: flex; justify-content: center; align-items: center; gap: 5px; flex: none; margin-bottom: -3px; position: relative; top: -3px; transform: translateY(3px); }
.g-sum .grp-lab, .g-rep .grp-lab, .g-tab .grp-lab { padding-left: 5px; }
.big { display: flex; flex-direction: column; align-items: center; gap: 5px; white-space: nowrap; }
.big.off { color: #aaa; }
.bi { width: 30px; height: 30px; }
.sel-btn { width: 40px; height: 67px; margin: 0 4px 0 8px; background: #bfd9f5; border-radius: 3px; display: flex; flex-direction: column; align-items: center; padding-top: 4px; gap: 3px; }
.sel-ic { width: 22px; height: 32px; }
.smalls { display: flex; flex-direction: column; gap: 7px; }
.sm { display: flex; align-items: center; gap: 4px; height: 16px; white-space: nowrap; }
.smi { width: 15px; height: 15px; }
.g-sum .big { margin-left: 10px; }
.sm2 { margin-left: 8px; }

.combos { display: flex; gap: 4px; padding: 3px 0 0 3px; background: #f0f0f0; border-bottom: 1px solid #ddd; }
.combo { width: 98px; height: 21px; background: #fff; border: 1px solid #ddd; border-radius: 3px; display: flex; justify-content: space-between; align-items: center; padding: 0 6px 0 3px; color: #aaa; }

/* work area */
.workarea { display: grid; grid-template-columns: 229px 6px 284px 1160px 4px 237px; background: #f0f0f0; }
.nav { grid-column: 1; background: #fff; border-left: 1px solid #ddd; border-right: 1px solid #ddd; }
.strip { height: 11px; background: #e4e4e4; border-top: 1px solid #ddd; display: flex; justify-content: flex-end; align-items: center; padding-right: 4px; }
.x { width: 9px; height: 9px; }
.panel-title { height: 22px; line-height: 22px; background: #f0f0f0; border-bottom: 1px solid #ddd; padding-left: 8px; color: #777; font-size: 13px; }
.nav-tools { height: 27px; display: flex; align-items: center; padding-left: 11px; gap: 6px; border-bottom: 1px solid #e4e4e4; }
.nt { width: 16px; height: 16px; }
.nt-on { width: 24px; height: 22px; background: #bfd9f5; border-radius: 3px; display: flex; align-items: center; justify-content: center; margin-left: 2px; }
.nt-on + .nt-on { margin-left: -2px; }
.sec-h { height: 25px; line-height: 25px; background: #ececec; margin-top: 3px; padding-left: 3px; }
.sec-h:nth-of-type(4) { margin-top: 5px; }
.nav-list { display: flex; flex-direction: column; }
.nav-list li { height: 25px; margin: 2px 0 1px; display: flex; align-items: center; padding-left: 17px; gap: 14px; flex: none; }
.nav-list li.on { background: #cfe4fb; }
.ni { width: 18px; height: 18px; }

.mid { grid-column: 3; display: flex; flex-direction: column; min-height: 0; }
.mid-top { height: 424px; background: #fff; border: 1px solid #ddd; border-top: 0; flex: none; }
.mid-tabs { height: 22px; display: flex; background: #f0f0f0; }
.mt { padding: 0 8px; line-height: 22px; white-space: nowrap; }
.mt.on { font-weight: 700; background: #f0f0f0; width: 64px; }
.mid-bar { height: 28px; display: flex; align-items: center; gap: 4px; padding-left: 3px; border-bottom: 1px solid #eee; }
.new { width: 16px; height: 18px; }
.mid-search { height: 20px; line-height: 20px; color: #aaa; padding-left: 2px; border-bottom: 1px solid #ddd; }
.mid-tree { padding-top: 6px; }
.mt-root { height: 16px; display: flex; align-items: center; gap: 4px; padding-left: 12px; }
.mt-sel { margin: 5px 0 0 39px; height: 21px; line-height: 21px; background: #cfe0f5; border-radius: 3px; padding-left: 3px; }
.mt-item { margin: 5px 0 0 42px; }
.strip.gap { margin-top: 5px; flex: none; }
.prop-tabs { height: 24px; display: flex; background: #ebebeb; flex: none; }
.pt { padding: 0 7px; line-height: 24px; color: #888; white-space: nowrap; }
.pt.on { background: #fff; color: #333; font-weight: 700; padding-left: 8px; flex: 1; }
.prop-body { flex: 1; background: #fff; border: 1px solid #ddd; border-top: 0; padding: 60px 0 0 3px; display: flex; align-items: flex-start; }
.black { width: 184px; height: 246px; background: #000; flex: none; }
.prop-side { margin-left: -18px; padding-top: 211px; position: relative; }
.angle { height: 18px; line-height: 18px; color: #888; }
.alpha { display: flex; align-items: center; gap: 6px; margin-top: 20px; color: #555; }
.ainput { width: 88px; height: 25px; line-height: 23px; border: 1px solid #ddd; padding-left: 3px; }
.rots { display: flex; gap: 6px; margin-top: 13px; margin-left: -1px; }
.rot { height: 20px; line-height: 18px; background: #e4e4e4; color: #aaa; border: 1px solid #ddd; text-align: center; width: 44px; }
.rot + .rot { width: 57px; }

.canvas { grid-column: 4; background: #20272f; position: relative; display: flex; align-items: flex-end; overflow: hidden; }
.prompt { width: 100%; height: 27px; background: #333; color: #fff; display: flex; align-items: center; justify-content: center; gap: 4px; font-weight: 700; }
.pic { width: 16px; height: 16px; }
.grid-lines { position: absolute; left: 0; top: 0; width: 1160px; height: 841px; }
.gl path { fill: none; stroke: #0d6a0d; stroke-width: 1; }
.lv { font: 18px "Liberation Sans", sans-serif; fill: #f0f0f0; text-anchor: end; }
.dimline { stroke: #555; fill: none; }
.axl text { font: 19px "Liberation Sans", sans-serif; fill: #555; text-anchor: middle; }
.axn { font: 700 15px "Liberation Sans", sans-serif; }
.zb { fill: #2f7fe0; } .zg { fill: #1cc21c; }
.vtool { position: absolute; right: 0; top: 0; width: 33px; height: 216px; background: #fff; border-radius: 0 0 3px 3px; display: flex; flex-direction: column; align-items: center; padding-top: 9px; gap: 6px; }
.vt { width: 24px; height: 24px; }
.vt.tall { margin-top: 0; }
.t2d { font: 700 8px "Liberation Sans", sans-serif; fill: #2f7fe0; }
.car.vc { margin: -1px 0; }
.vsep { width: 22px; margin: 0; border: 0; border-top: 1px solid #999; }

/* display panel */
.display { grid-column: 6; background: #fff; border-left: 1px solid #ddd; display: flex; flex-direction: column; }
.disp-tabs { height: 27px; display: flex; gap: 4px; padding: 0 0 0 3px; border-bottom: 1px solid #ddd; margin-top: 1px; align-items: flex-end; }
.dt { width: 60px; height: 26px; line-height: 26px; text-align: center; background: #e0e0e0; border-radius: 3px 3px 0 0; color: #555; font-size: 12px; }
.dt.on { background: #fff; color: #2f7fe0; border: 1px solid #ddd; border-bottom: 0; }
.dtable { position: relative; height: 740px; margin: 1px 3px 0 2px; border: 1px solid #ddd; flex: none; overflow: hidden; }
.dhead, .row { display: grid; grid-template-columns: 100px 64px 62px; }
.dhead { height: 21px; line-height: 21px; border-bottom: 1px solid #e0e0e0; text-align: center; }
.dhead span { border-right: 1px solid #e0e0e0; white-space: nowrap; overflow: hidden; }
.drows { height: 700px; overflow: hidden; }
.row { height: 21px; border-bottom: 1px solid #e4e4e4; }
.nm { border-right: 1px solid #e4e4e4; display: flex; align-items: center; gap: 5px; white-space: nowrap; }
.l0 { padding-left: 2px; } .l1 { padding-left: 12px; background: linear-gradient(#ddd, #ddd) 11px 50% / 4px 1px no-repeat; }
.l2 { padding-left: 41px; background: linear-gradient(#ddd, #ddd) 19px 0 / 1px 100% no-repeat, linear-gradient(#ddd, #ddd) 19px 50% / 16px 1px no-repeat; }
.exp { width: 13px; height: 13px; border: 1px solid #777; border-radius: 2px; position: relative; flex: none; }
.exp::after { content: ""; position: absolute; left: 3px; top: 5px; width: 5px; height: 1px; background: #333; }
.c { border-right: 1px solid #e4e4e4; display: flex; align-items: center; justify-content: center; }
.ck, .un, .dis { width: 14px; height: 14px; border-radius: 2px; display: block; position: relative; }
.ck { background: #2f7fe0; }
.ck::after { content: ""; position: absolute; left: 4px; top: 1px; width: 5px; height: 9px; border: solid #fff; border-width: 0 2px 2px 0; transform: rotate(40deg); }
.un { background: #fff; border: 1px solid #888; }
.dis { background: #f0f0f0; border: 1px solid #bbb; }
.vscroll { position: absolute; right: 5px; top: 22px; width: 8px; height: 700px; background: #ccc; border-radius: 4px; }
.hscroll { height: 17px; display: flex; align-items: center; padding: 0 19px 0 6px; position: relative; background: #fff; }
.hl { border-right: 4px solid #555; border-top: 4px solid transparent; border-bottom: 4px solid transparent; }
.hthumb { width: 124px; height: 13px; background: #ccc; border-radius: 6px; margin-left: 4px; }
.hr { margin-left: auto; border-left: 4px solid #555; border-top: 4px solid transparent; border-bottom: 4px solid transparent; }
.disp-foot { flex: 1; display: flex; justify-content: flex-end; align-items: flex-start; padding: 7px 8px 0 0; }
.btn { display: inline-block; background: #fff; border: 1px solid #ccc; border-radius: 3px; text-align: center; }
.disp-foot .btn { width: 90px; height: 25px; line-height: 23px; }

/* status */
.status { display: flex; align-items: center; background: #fafafa; position: relative; }
.st { white-space: nowrap; }
.st1 { width: 92px; padding-left: 2px; } .st2 { width: 110px; } .st3 { width: 110px; } .st4 { width: 110px; }
.stools { display: flex; align-items: center; gap: 3.6px; }
.sb { height: 24px; width: 25px; background: #fff; border: 1px solid #bbb; border-radius: 3px; display: flex; align-items: center; justify-content: center; gap: 2px; }
.sb svg { width: 16px; height: 16px; }
.sb.wd { width: 35px; }
.sb.on { background: #d4e6fb; border-color: #6aa5ea; }
.sb .car { border-width: 2px; border-top-width: 3px; }
.wp { width: 99px; height: 24px; background: #fff; border: 1px solid #bbb; border-radius: 3px; display: flex; align-items: center; justify-content: space-between; padding: 0 6px 0 3px; }

/* taskbar */
.taskbar { display: flex; align-items: center; border-top: 1px solid #12324f; background: linear-gradient(115deg, transparent 66%, rgba(255,255,255,.35) 67.5%, transparent 69%), linear-gradient(90deg, #1c6aa6 0, #4b9fd0 24%, #3f97cc 58%, #1f67a9 74%, #1e62a6 100%); position: relative; }
.orb { width: 40px; height: 38px; margin-left: 6px; }
.tgrip { width: 8px; height: 28px; background: radial-gradient(circle, #0d2c48 1px, transparent 1.5px) 0 0 / 4px 4px; margin-left: 9px; flex: none; }
.tbtns { display: flex; gap: 4px; margin-left: 14px; }
.tb { width: 58px; height: 38px; border: 1px solid #1a4d78; border-radius: 2px; background: linear-gradient(160deg, rgba(255,255,255,.45), rgba(255,255,255,.12)); display: flex; align-items: center; justify-content: center; }
.tb svg { width: 32px; height: 32px; }
.tb.act { background: linear-gradient(160deg, rgba(255,255,255,.8), rgba(255,255,255,.45)); }
.yu { width: 30px; height: 32px; border-radius: 6px; background: #2e76f0; color: #fff; font-size: 23px; line-height: 32px; text-align: center; font-weight: 700; }
.tray { margin-left: auto; display: flex; align-items: center; gap: 7.5px; }
.ti { width: 16px; height: 16px; }
.thelp { font: 700 11px "Liberation Sans", sans-serif; fill: #fff; text-anchor: middle; }
.clock { width: 76px; display: flex; flex-direction: column; color: #fff; text-align: center; line-height: 16px; margin-left: 4px; }
.showd { width: 16px; height: 22px; background: #fff; display: flex; align-items: center; justify-content: center; }
.showd i { border-left: 4px solid #222; border-top: 4px solid transparent; border-bottom: 4px solid transparent; }
.gloss { width: 14px; height: 38px; background: linear-gradient(#9fc4e0, #3d80b5); border: 1px solid #1a4d78; margin-left: 2px; }

/* windows */
.dlg { position: absolute; background: #fff; }
.big-dlg { left: 323px; top: 157px; width: 1258px; height: 709px; box-shadow: 0 0 2px #888, 1px 3px 4px rgba(0,0,0,.35); display: flex; flex-direction: column; }
.dlg-head { height: 40px; flex: none; display: flex; align-items: center; justify-content: space-between; padding: 0 0 4px 12px; }
.dlg-title { font-size: 14px; }
.dlg-ctl { display: flex; gap: 17px; padding-right: 12px; }
.dlg-bar { height: 25px; margin: 0 11px; border: 1px solid #ccc; display: flex; align-items: center; gap: 4px; padding-left: 2px; flex: none; white-space: nowrap; }
.dcombo { width: 88px; height: 21px; border: 1px solid #ccc; border-radius: 4px; display: flex; align-items: center; justify-content: space-between; padding: 0 6px 0 3px; margin-right: 3px; }
.big16 { width: 16px; height: 18px; }
.dlg-body { display: flex; gap: 6px; margin: 7px 12px 0 11px; height: 609px; flex: none; }
.col1 { width: 138px; display: flex; flex-direction: column; gap: 4px; flex: none; }
.col2 { width: 238px; display: flex; flex-direction: column; gap: 4px; flex: none; }
.fr { border: 1px solid #ccc; }
.frbar { height: 27px; display: flex; align-items: center; gap: 4px; padding-left: 6px; flex: none; }
.tree { flex: 1; padding: 1px 0 0 10px; position: relative; overflow: hidden; }
.tp, .ti2 { height: 24px; display: flex; align-items: center; }
.tp { gap: 4px; padding-left: 3px; }
.ti2 span { display: block; padding-left: 3px; width: 67px; height: 21px; line-height: 21px; white-space: nowrap; margin-left: 30px; border-radius: 3px; }
.ti2.on span { background: #cfe4fb; }
.tscroll { position: absolute; left: 125px; top: 16px; width: 8px; height: 222px; background: #ccc; border-radius: 4px; }
.tree2 { flex: 1; padding: 6px 0 0 12px; }
.tp2 { display: flex; align-items: center; gap: 4px; height: 16px; }
.t2sel { margin: 5px 0 0 29px; height: 21px; line-height: 21px; background: #c9dcf4; padding-left: 2px; border-radius: 3px; }
.col3 { flex: 1; display: flex; flex-direction: column; border: 1px solid #ccc; min-width: 0; }
.thead, .trow { display: grid; grid-template-columns: 1fr 101px 37px; flex: none; }
.thead { height: 20px; background: #efefef; border-bottom: 1px solid #ccc; }
.th { text-align: center; line-height: 19px; white-space: nowrap; overflow: hidden; border-right: 1px solid #ccc; }
.th.blue { background: #7db7f5; color: #fff; font-weight: 700; text-align: right; padding-right: 21px; }
.th.thl { text-align: left; padding-left: 24px; border-right: 0; }
.trow { height: 21px; border-bottom: 1px solid #ddd; }
.trow span { border-right: 1px solid #ddd; line-height: 20px; padding-left: 5px; }
.trow .ellip { border: 2px solid #6aa5ea; display: flex; align-items: center; justify-content: flex-end; padding: 0 2px 0 0; }
.ellip b { width: 16px; height: 14px; border: 1px solid #6aa5ea; border-radius: 2px; display: block; background: radial-gradient(circle, #2f7fe0 1px, transparent 1.3px) 1px 50% / 4px 4px repeat-x; }
.tspace { flex: 1; }
.tscrollh { height: 6px; margin-bottom: 2px; width: 358px; background: #bbb; border-radius: 3px; }
.dlg-status { height: 28px; display: flex; align-items: center; justify-content: space-between; padding: 4px 0 0 14px; background: #fafafa; flex: 1; }
.stat-r { display: flex; gap: 16px; padding-right: 5px; align-items: center; color: #444; white-space: nowrap; }
.grip { width: 16px; height: 10px; margin-left: 10px; background: radial-gradient(circle, #888 1px, transparent 1.2px) 0 0 / 3px 3px; }

.small-dlg { left: 529px; top: 178px; width: 831px; height: 650px; box-shadow: 0 0 2px #777, 5px 5px 12px rgba(0,0,0,.65), -4px 0 10px rgba(0,0,0,.4); padding: 0 10px 0 9px; display: flex; flex-direction: column; }
.dlg-head2 { height: 37px; flex: none; display: flex; align-items: center; justify-content: space-between; padding: 0 3px 2px 2px; }
.dlg-title2 { font-size: 14px; }
.wc2 { width: 12px; height: 12px; }
.s-tabs { height: 25px; display: flex; gap: 4px; flex: none; align-items: flex-end; padding-left: 1px; }
.s-tab { width: 52px; height: 25px; line-height: 25px; background: #e4e4e4; text-align: center; color: #666; border-radius: 3px 3px 0 0; margin-bottom: -1px; position: relative; }
.s-tab.on { background: #fff; color: #2f7fe0; border: 1px solid #ccc; border-bottom: 1px solid #fff; }
.s-tab + .s-tab { height: 23px; line-height: 23px; width: 51px; }
.s-frame { height: 518px; border: 1px solid #ccc; display: flex; gap: 5px; padding: 0 4px 0 4px; flex: none; }
.s-left { width: 327px; flex: none; }
.s-lab { height: 24px; line-height: 24px; }
.s-lab.lab2 { margin-top: 6px; }
.secgrid { display: grid; grid-template-columns: repeat(5, 65px); grid-auto-rows: 65px; border: 1px solid #c4c4c4; width: 327px; }
.cell { border-right: 1px solid #d4d4d4; border-bottom: 1px solid #d4d4d4; overflow: hidden; }
.cell:nth-child(5n) { border-right: 0; }
.span4 { grid-column: span 4; border: 0; }
.span2 { grid-column: span 2; border: 0; }
.g2 .cell:nth-child(n+11) { border-bottom: 0; }
.picked { box-shadow: inset 0 0 0 2px #6aa9ea; }
.sec { width: 65px; height: 65px; fill: #cfe2fb; stroke: #2d7fe6; stroke-width: 3; }
.sec .w { fill: #fff; }
.sec.hatch rect { fill: url(#hatch); }
.s-right { flex: 1; min-width: 0; display: flex; flex-direction: column; padding-top: 4px; }
.spec { height: 22px; display: flex; align-items: center; flex: none; }
.spec label { width: 65px; flex: none; }
.spec-in { flex: 1; height: 22px; line-height: 20px; background: #e4e4e4; border: 1px solid #ccc; border-radius: 2px; color: #999; padding-left: 2px; }
.drawing { width: 470px; height: 480px; margin-top: 4px; background: #000; border: 1px solid #888; }
.dm path { fill: none; stroke: #1d6a1d; stroke-width: 3; }
.sh path { fill: none; stroke: #cfcfcf; stroke-width: 6; }
.dt-txt text { font: 42px "DejaVu Sans", sans-serif; fill: #00ff00; }
.s-foot1 { margin-top: 6px; height: 26px; flex: none; }
.pbtn { display: inline-block; background: #2f7fe0; color: #fff; border-radius: 3px; text-align: center; }
.pbtn.wide { width: 102px; height: 26px; line-height: 26px; }
.s-foot2 { display: flex; justify-content: flex-end; gap: 6px; margin-top: 6px; padding-right: 5px; }
.pbtn.ok { width: 75px; height: 23px; line-height: 23px; }
.btn.cancel { width: 75px; height: 23px; line-height: 21px; }
```
